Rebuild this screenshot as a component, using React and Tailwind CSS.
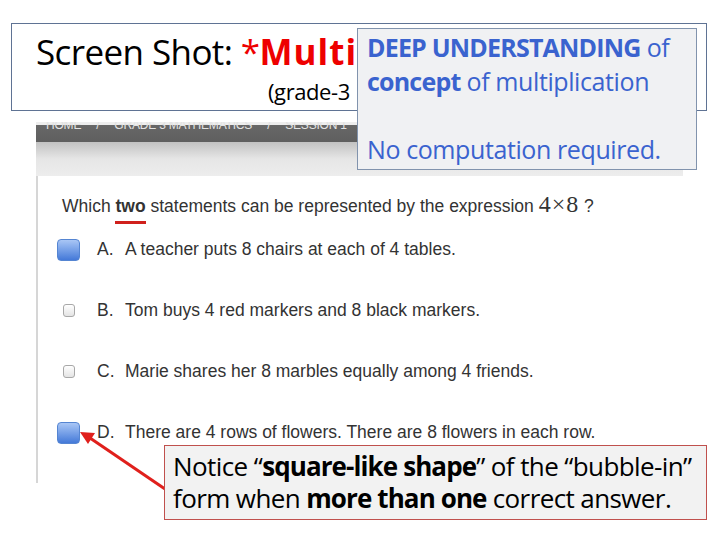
import React from "react";

const Box = ({ checked }) =>
  checked ? (
    <div className="w-[23px] h-[22px] rounded-[4px] border border-[#5585d2] bg-gradient-to-b from-[#a9c6f5] to-[#4479d8] shrink-0" />
  ) : (
    <div className="ml-[6px] mr-[5px] w-[12px] h-[13px] rounded-[3px] border border-[#a8a8a8] bg-gradient-to-b from-white to-[#e4e4e4] shrink-0" />
  );

const Option = ({ letter, text, checked }) => (
  <div className="flex items-center h-[61px]">
    <Box checked={checked} />
    <span className="ml-[17px] w-[28px]">{letter}.</span>
    <span>{text}</span>
  </div>
);

export default function App() {
  return (
    <div className="relative w-[720px] h-[540px] bg-white overflow-hidden" style={{ fontFamily: "'Liberation Sans', Arial, sans-serif" }}>
      {/* Screenshot area */}
      <div className="pt-[122px] pl-[36px] w-[683px]">
        <div className="h-[20px] overflow-hidden bg-[linear-gradient(to_bottom,#eeeeee_0px,#eeeeee_3px,#676767_3px,#5f5f5f_100%)]">
          <div className="-mt-[4px] text-[#e2e2e2] text-[12px] leading-[14px] tracking-[-0.2px] pl-[10px] flex gap-[15px]">
            <span>HOME</span><span>/</span><span>GRADE 3 MATHEMATICS</span><span>/</span><span>SESSION 1</span><span>/</span>
          </div>
        </div>
        <div className="h-[34px] bg-gradient-to-b from-[#c2c2c2] via-[#e6e6e6] to-[#ededed]" />
        <div className="h-[307px] bg-white border-l-[2px] border-[#d6d6d6] overflow-hidden text-[#333333] text-[17.5px]">
          <div className="pt-[10px] pl-[24px] flex items-baseline">
            <span>Which&nbsp;</span>
            <span className="relative font-bold">
              two
              <span className="absolute left-0 right-0 -bottom-[5px] h-[3px] bg-[#d0201c]" />
            </span>
            <span>&nbsp;statements can be represented by the expression&nbsp;</span>
            <span className="text-[24px] tracking-[1px]" style={{ fontFamily: "'Liberation Serif', serif" }}>4×8</span>
            <span>&nbsp;?</span>
          </div>
          <div className="pl-[19px] -mt-[3px]">
            <Option letter="A" text="A teacher puts 8 chairs at each of 4 tables." checked />
            <Option letter="B" text="Tom buys 4 red markers and 8 black markers." />
            <Option letter="C" text="Marie shares her 8 marbles equally among 4 friends." />
            <Option letter="D" text="There are 4 rows of flowers. There are 8 flowers in each row." checked />
            <Option letter="E" text="" />
          </div>
        </div>
      </div>

      {/* Title box overlay */}
      <div className="absolute left-[11px] top-[23px] w-[696px] h-[88px] bg-white border border-[#5f7394]" style={{ fontFamily: "'Open Sans', sans-serif" }}>
        <div className="absolute left-[24px] top-[2px] text-[35px] tracking-[-0.6px] whitespace-nowrap text-black">
          Screen Shot: <span className="text-[#ee0000]">*</span><span className="text-[#ee0000] font-bold tracking-[1px]">Multiple Select</span>
        </div>
        <div className="absolute left-[256px] top-[51px] text-[22px] tracking-[-0.4px] whitespace-nowrap text-black">
          (grade-3<span className="ml-[20px]">sample)</span>
        </div>
      </div>

      {/* Blue note overlay */}
      <div className="absolute left-[357px] top-[28px] w-[340px] h-[142px] bg-[#f0f1f3] border border-[#8193ad] text-[#3a63cf] text-[25px] leading-[34px] tracking-[-0.4px] pl-[9px] pt-[1px]" style={{ fontFamily: "'Open Sans', sans-serif" }}>
        <div><span className="font-bold tracking-[-0.8px]">DEEP UNDERSTANDING</span> of</div>
        <div><span className="font-bold tracking-[-0.8px]">concept</span> of multiplication</div>
        <div>&nbsp;</div>
        <div>No computation required.</div>
      </div>

      {/* Arrow */}
      <svg className="absolute left-0 top-0" width="720" height="540">
        <line x1="165" y1="489" x2="90" y2="438" stroke="#e0201c" strokeWidth="3" />
        <polygon points="80,432 95,433 88,444" fill="#e0201c" />
      </svg>

      {/* Red note */}
      <div className="absolute left-[164px] top-[445px] w-[543px] h-[75px] bg-[#f2f2f2] border border-[#c0504d] text-black text-[26px] leading-[32px] tracking-[-0.6px] pl-[8px] pt-[4px] whitespace-nowrap" style={{ fontFamily: "'Open Sans', sans-serif" }}>
        <div>Notice “<span className="font-bold tracking-[-0.9px]">square-like shape</span>” of the “bubble-in”</div>
        <div>form when <span className="font-bold tracking-[-0.9px]">more than one</span> correct answer.</div>
      </div>
    </div>
  );
}
